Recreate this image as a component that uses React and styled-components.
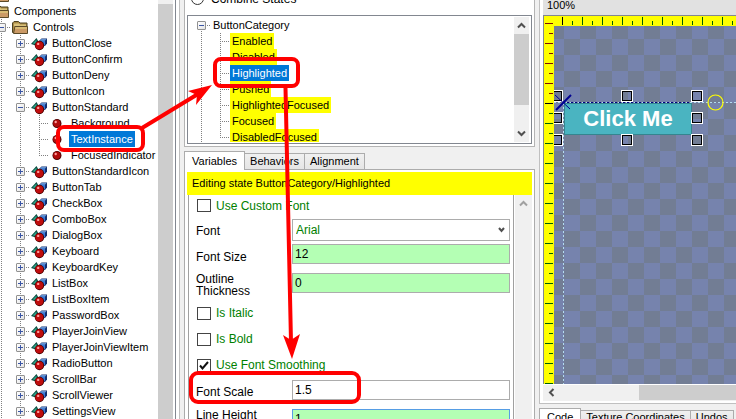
import React from "react";
import styled, { createGlobalStyle, css } from "styled-components";

const GlobalStyle = createGlobalStyle`
  * { box-sizing: border-box; }
  body {
    margin: 0;
    background: #f0f0f0;
    color: #000;
    font: 11px/16px "Liberation Sans", Arial, sans-serif;
    overflow: hidden;
  }
  button, input, select { font: inherit; color: inherit; border-radius: 0; }
`;

const Shell = styled.main`
  position: relative;
  display: grid;
  grid-template-columns: minmax(0, 180px) minmax(0, 359px) minmax(0, 1fr);
  grid-template-rows: minmax(0, 1fr);
  height: 100vh;
  overflow: hidden;
`;

/* ---------- shared tree parts ---------- */

const dotsDown = "repeating-linear-gradient(#808080 0 1px, transparent 1px 2px)";
const dotsAcross = "repeating-linear-gradient(90deg, #808080 0 1px, transparent 1px 2px)";

const Row = styled.div`
  display: flex;
  align-items: center;
  flex: none;
  height: 16px;
  white-space: nowrap;
`;

const Guide = styled.span`
  display: flex;
  align-items: center;
  justify-content: ${(p) => (p.$edge ? "flex-start" : "center")};
  flex: none;
  width: ${(p) => (p.$edge ? 11 : 19)}px;
  height: 16px;
  overflow: hidden;
  background-repeat: no-repeat;
  background-image: ${(p) => (p.$down ? dotsDown : "none")}, ${(p) => (p.$across ? dotsAcross : "none")};
  background-size: 1px ${(p) => (p.$down === "half" ? "8px" : "16px")}, ${(p) => (p.$edge ? 8 : 10)}px 1px;
  background-position: ${(p) => (p.$edge ? 1 : 9)}px ${(p) => (p.$down === "below" ? "8px" : "0")}, right 8px;
`;

const ExpanderButton = styled.button`
  display: flex;
  flex: none;
  width: 9px;
  height: 9px;
  margin: 0 0 0 ${(p) => (p.$edge ? -3 : 0)}px;
  padding: 0;
  border: 1px solid #919191;
  border-radius: 1px;
  background: linear-gradient(135deg, #fff, #e4e4e4);
`;

const Label = styled.span`
  flex: none;
  height: 16px;
  padding: 0 2px;
  color: ${(p) => (p.$selected ? "#fff" : "#000")};
  background: ${(p) => (p.$selected ? "#0078d7" : p.$marked ? "#ffff00" : "transparent")};
`;

const IconCell = styled.span`
  display: flex;
  flex: none;
  width: 20px;
  height: 16px;
  padding-left: 1px;
  margin-left: ${(p) => (p.$root ? -8 : 0)}px;
`;

function Expander({ open, edge, name }) {
  return (
    <ExpanderButton $edge={edge} aria-label={`${open ? "Collapse" : "Expand"} ${name}`}>
      <svg width="7" height="7" shapeRendering="crispEdges" aria-hidden="true">
        <path d={open ? "M1 3.5h5" : "M1 3.5h5M3.5 1v5"} stroke="#3b56a5" />
      </svg>
    </ExpanderButton>
  );
}

const FolderIcon = () => (
  <svg width="17" height="16" viewBox="0 0 17 16" aria-hidden="true">
    <path d="M.5 13.500V4L2 2.500h4.500L8 4h7v9.500z" fill="#a98a45" stroke="#4d4222" />
    <path d="M2 4.500h5l1 1h6v1.500H2z" fill="#d9c27c" />
    <path d="M1.500 14.500L3 7.500h12.500v7z" fill="#cb9a66" stroke="#5b4a28" />
    <path d="M3.500 8h11.500v2H3z" fill="#d8bb74" />
  </svg>
);

const ComponentIcon = () => (
  <svg width="17" height="16" viewBox="0 0 17 16" aria-hidden="true">
    <path d="M8.500 5.500L10.500 3.500H16v5L14 11H8.500z" fill="#122f6e" />
    <path d="M9 5.500h5v5H9z" fill="#3478da" />
    <path d="M10.500 4.200h5L14 5.500H9z" fill="#7fb5f5" />
    <path d="M0 9L5.500 3L8.500 8.500L5 10.500z" fill="#08483c" />
    <path d="M1.500 8.500L5.500 4.500v4.500z" fill="#2fa58a" />
    <circle cx="8.500" cy="10.500" r="4.700" fill="#4e0000" />
    <circle cx="8.300" cy="10.300" r="3.900" fill="#bf0c0c" />
    <circle cx="7.200" cy="8.900" r="1.200" fill="#ff9c9c" />
  </svg>
);

const BallIcon = () => (
  <svg width="16" height="16" viewBox="0 0 16 16" aria-hidden="true">
    <circle cx="7" cy="8.500" r="4.500" fill="#4e0000" />
    <circle cx="6.800" cy="8.300" r="3.600" fill="#b00c0c" />
    <circle cx="5.700" cy="7" r="1.200" fill="#ff9c9c" />
  </svg>
);

/* ---------- scroll bars ---------- */

const Chevron = styled.svg`
  display: block;
  flex: none;
  fill: none;
  stroke: ${(p) => p.$tone || "#505050"};
  stroke-width: 2;
`;

const ScrollTrack = styled.div`
  display: flex;
  flex-direction: column;
  align-items: center;
  justify-content: space-between;
  flex: none;
  width: ${(p) => p.$width || 15}px;
  padding: 5px 0;
  background: #f0f0f0;
`;

const Thumb = styled.div`
  align-self: stretch;
  flex: none;
  background: #cdcdcd;
  ${(p) => (p.$share ? css`height: ${p.$share}; margin: 5px 0 auto;` : css`flex: 1;`)}
`;

const Up = ({ tone }) => (
  <Chevron width="9" height="7" $tone={tone} aria-hidden="true"><path d="M1 5.500L4.500 2L8 5.500" /></Chevron>
);
const Down = () => (
  <Chevron width="9" height="7" aria-hidden="true"><path d="M1 1.500L4.500 5L8 1.500" /></Chevron>
);

/* ---------- element tree ---------- */

const TreePane = styled.nav`
  display: flex;
  border-right: 1px solid #c0c0c0;
  background: #fff;
  min-width: 0;
`;

const TreeBody = styled.div`
  display: flex;
  flex-direction: column;
  flex: 1;
  min-width: 0;
  overflow: hidden;
  background: #fff;
`;

const ClippedRow = styled(Row)`
  height: 3px;
  align-items: flex-end;
  overflow: hidden;
`;

const TreeFrame = styled.div`
  display: flex;
  flex: 1;
  min-width: 0;
  margin-right: 3px;
  padding-right: 2px;
  border-right: 1px solid #828790;
`;

const TreeTrack = styled(ScrollTrack)`
  padding: 4px 0 0;
`;

const beforeOpen = ["ButtonClose", "ButtonConfirm", "ButtonDeny", "ButtonIcon"];
const parts = ["Background", "TextInstance", "FocusedIndicator"];
const afterOpen = [
  "ButtonStandardIcon", "ButtonTab", "CheckBox", "ComboBox", "DialogBox", "Keyboard", "KeyboardKey",
  "ListBox", "ListBoxItem", "PasswordBox", "PlayerJoinView", "PlayerJoinViewItem", "RadioButton",
  "ScrollBar", "ScrollViewer", "SettingsView",
];

function ComponentRow({ name, open }) {
  return (
    <Row>
      <Guide $edge $down="full" />
      <Guide $down="full" $across><Expander open={open} name={name} /></Guide>
      <IconCell><ComponentIcon /></IconCell>
      <Label>{name}</Label>
    </Row>
  );
}

function ElementTree() {
  return (
    <TreePane aria-label="Elements">
      <TreeFrame>
        <TreeBody>
          <ClippedRow><IconCell $root><FolderIcon /></IconCell></ClippedRow>
          <Row><IconCell $root><FolderIcon /></IconCell><Label>Components</Label></Row>
          <Row>
            <Guide $edge $down="full" $across><Expander open edge name="Controls" /></Guide>
            <IconCell><FolderIcon /></IconCell>
            <Label>Controls</Label>
          </Row>
          {beforeOpen.map((n) => <ComponentRow key={n} name={n} />)}
          <ComponentRow name="ButtonStandard" open />
          {parts.map((n, i) => (
            <Row key={n}>
              <Guide $edge $down="full" />
              <Guide $down="full" />
              <Guide $down={i === parts.length - 1 ? "half" : "full"} $across />
              <IconCell><BallIcon /></IconCell>
              <Label $selected={n === "TextInstance"}>{n}</Label>
            </Row>
          ))}
          {afterOpen.map((n) => <ComponentRow key={n} name={n} />)}
        </TreeBody>
        <TreeTrack><Thumb /></TreeTrack>
      </TreeFrame>
    </TreePane>
  );
}

/* ---------- states and variables ---------- */

const MiddlePane = styled.div`
  display: flex;
  flex-direction: column;
  min-width: 0;
  padding: 0 4px;
`;

const StatesPanel = styled.section`
  flex: none;
  padding: 0 2px 2px;
  border: 1px solid #b4b4b4;
  border-top: 0;
  background: #fff;
`;

const CombineOption = styled.label`
  display: flex;
  align-items: flex-end;
  gap: 7px;
  height: 15px;
  padding: 0 0 9px 4px;
  font-size: 12px;
  overflow: hidden;
  white-space: nowrap;

  span { line-height: 14px; }
`;

const Radio = styled.input`
  appearance: none;
  flex: none;
  width: 13px;
  height: 13px;
  margin: 0 0 1px;
  border: 1px solid #333;
  border-radius: 50%;
  background: #fff;
`;

const StateBox = styled.div`
  display: flex;
  height: 129px;
  padding: 1px 2px 1px 4px;
  border: 1px solid #828790;
`;

const states = ["Enabled", "Disabled", "Highlighted", "Pushed", "HighlightedFocused", "Focused", "DisabledFocused"];

const TabStrip = styled.div`
  display: flex;
  align-items: flex-end;
  flex: none;
  height: 22px;
`;

const Tab = styled.button`
  flex: none;
  height: ${(p) => (p.$active ? 19 : 16)}px;
  margin-bottom: ${(p) => (p.$active ? -1 : 0)}px;
  padding: 0 ${(p) => (p.$active ? 7 : 5)}px;
  border: 1px solid #acacac;
  border-bottom: 0;
  border-left-width: ${(p) => (p.$joined ? 0 : 1)}px;
  background: ${(p) => (p.$active ? "#fff" : "linear-gradient(#f0f0f0, #e5e5e5)")};
  line-height: 15px;
  white-space: nowrap;
  z-index: 1;
`;

const VariablesPanel = styled.section`
  display: flex;
  flex-direction: column;
  flex: 1;
  min-height: 0;
  padding: 2px 2px 0;
  border: 1px solid #acacac;
  border-bottom: 0;
  background: #fff;
`;

const Banner = styled.div`
  flex: none;
  height: 23px;
  padding-left: 5px;
  background: #ffff00;
  line-height: 23px;
  white-space: nowrap;
`;

const FormArea = styled.div`
  display: flex;
  flex: 1;
  min-height: 0;
  padding-left: 1px;
`;

const Form = styled.form`
  display: flex;
  flex-direction: column;
  flex: 1;
  min-width: 0;
  margin-right: 1px;
  border: solid #a0a0a0;
  border-width: 0 1px;
  overflow: hidden;
  font-size: 12px;
`;

const CheckLine = styled.label`
  display: flex;
  align-items: center;
  flex: none;
  gap: 5px;
  height: ${(p) => (p.$first ? 23 : 26)}px;
  padding: 0 0 2px 8px;
  color: #008000;
  white-space: nowrap;
`;

const CheckBox = styled.input`
  appearance: none;
  flex: none;
  width: 14px;
  height: 13px;
  margin: 0;
  border: 1px solid #444;
  background: #fff;

  &:checked {
    background: url("data:image/svg+xml,%3Csvg xmlns='http://www.w3.org/2000/svg' viewBox='0 0 12 11'%3E%3Cpath d='M2 5.500L4.500 8.500L10 2' fill='none' stroke='%23111' stroke-width='2'/%3E%3C/svg%3E") center / 12px 11px no-repeat;
  }
`;

const Field = styled.label`
  display: grid;
  grid-template-columns: 103px minmax(0, 1fr);
  align-items: start;
  flex: none;
  height: ${(p) => (p.$compact ? 25 : 29)}px;
  padding: 1px 3px 0 0;
`;

const FieldName = styled.span`
  padding: ${(p) => p.$drop}px 30px 0 7px;
  line-height: 12px;
`;

const fieldBox = css`
  width: 100%;
  margin: 0;
  border: 1px solid #acacac;
  outline: 0;
`;

const TextField = styled.input`
  ${fieldBox}
  height: 20px;
  padding: 0 2px;
  background: ${(p) => (p.$plain ? "#fff" : "#b4ffb4")};
  border-color: ${(p) => (p.$focused ? "#569de5" : "#acacac")};
`;

const SelectWrap = styled.span`
  display: grid;
  align-items: center;

  > * { grid-area: 1 / 1; }
  > svg { justify-self: end; margin-right: 5px; pointer-events: none; }
`;

const SelectField = styled.select`
  ${fieldBox}
  appearance: none;
  height: 22px;
  padding: 0 3px;
  background: #fff;
  color: #008000;
`;

function CheckRow({ text, checked, first }) {
  return (
    <CheckLine $first={first}>
      <CheckBox type="checkbox" defaultChecked={checked} />
      {text}
    </CheckLine>
  );
}

function TextRow({ name, value, drop, plain, focused }) {
  return (
    <Field>
      <FieldName $drop={drop}>{name}</FieldName>
      <TextField defaultValue={value} $plain={plain} $focused={focused} />
    </Field>
  );
}

function Inspector() {
  return (
    <MiddlePane>
      <StatesPanel aria-label="States">
        <CombineOption><Radio type="radio" name="stateMode" /><span>Combine States</span></CombineOption>
        <StateBox>
          <TreeBody>
            <Row>
              <Guide $down="below" $across><Expander open name="ButtonCategory" /></Guide>
              <Label>ButtonCategory</Label>
            </Row>
            {states.map((n, i) => (
              <Row key={n}>
                <Guide $down="full" />
                <Guide $down={i === states.length - 1 ? "half" : "full"} $across />
                <Label $marked $selected={n === "Highlighted"}>{n}</Label>
              </Row>
            ))}
          </TreeBody>
          <ScrollTrack><Up /><Thumb $share="71px" /><Down /></ScrollTrack>
        </StateBox>
      </StatesPanel>
      <TabStrip>
        <Tab $active>Variables</Tab>
        <Tab $joined>Behaviors</Tab>
        <Tab $joined>Alignment</Tab>
      </TabStrip>
      <VariablesPanel>
        <Banner>Editing state ButtonCategory/Highlighted</Banner>
        <FormArea>
          <Form>
            <CheckRow text="Use Custom Font" first />
            <Field $compact>
              <FieldName $drop={6}>Font</FieldName>
              <SelectWrap>
                <SelectField defaultValue="Arial"><option>Arial</option></SelectField>
                <Chevron width="7" height="6" aria-hidden="true"><path d="M1 1L3.500 4L6 1" /></Chevron>
              </SelectWrap>
            </Field>
            <TextRow name="Font Size" value="12" drop={7} />
            <TextRow name="Outline Thickness" value="0" drop={0} />
            <CheckRow text="Is Italic" />
            <CheckRow text="Is Bold" />
            <CheckRow text="Use Font Smoothing" checked />
            <TextRow name="Font Scale" value="1.5" drop={6} plain />
            <TextRow name="Line Height" value="1" drop={0} focused />
          </Form>
          <ScrollTrack $width={17}><Up tone="#a0a0a0" /></ScrollTrack>
        </FormArea>
      </VariablesPanel>
    </MiddlePane>
  );
}

/* ---------- editor ---------- */

const EditorPane = styled.section`
  display: flex;
  flex-direction: column;
  min-width: 0;
  min-height: 0;
`;

const EditorFrame = styled.div`
  display: flex;
  flex-direction: column;
  flex: 1;
  min-height: 0;
  padding: 0 0 2px 3px;
  border: solid #c0c0c0;
  border-width: 0 0 1px 1px;
  background: #fff;
`;

const ZoomBar = styled.div`
  flex: none;
  height: 15px;
  padding-left: 4px;
  overflow: hidden;
  background: #e1e1e1;
  line-height: 11px;
`;

const Surface = styled.div`
  display: grid;
  grid-template: 10px minmax(0, 1fr) / 10px minmax(0, 1fr);
  flex: 1;
  min-height: 0;
  border: solid #828790;
  border-width: 1px 0 0 1px;
  background: #ffff00;
`;

const Ruler = styled.svg`
  display: block;
  width: 100%;
  height: 100%;
  overflow: hidden;
  grid-area: ${(p) => p.$area};
`;

const Stage = styled.div`
  grid-area: 2 / 2;
  position: relative;
  overflow: hidden;
  background: conic-gradient(#727d94 25%, #7683ad 0 50%, #727d94 0 75%, #7683ad 0) 10px -3px / 32px 32px;
`;

const StageButton = styled.button`
  position: absolute;
  left: 10px;
  top: 77px;
  width: 128px;
  height: 32px;
  padding: 0;
  border: 1px solid #34858f;
  background: #4ab4c1;
  color: #fff;
  font-size: 22px;
  font-weight: 700;
  line-height: 30px;
  white-space: nowrap;
`;

const Overlay = styled.svg`
  position: absolute;
  inset: 0;
  z-index: 2;
  width: 100%;
  height: 100%;
  pointer-events: none;
`;

const BottomTrack = styled.div`
  display: flex;
  flex: none;
  height: 16px;
  margin-top: 1px;
  padding-bottom: 1px;
  background: #f0f0f0;

  svg { margin: 3px 0 0 4px; }
`;

const BottomThumb = styled.div`
  flex: 1;
  margin-left: 84px;
  background: #cdcdcd;
`;

const BottomTabs = styled.div`
  display: flex;
  align-items: flex-start;
  flex: none;
  height: 11px;
  margin-top: 4px;
  overflow: hidden;
`;

const BottomTab = styled(Tab)`
  height: ${(p) => (p.$active ? 17 : 14)}px;
  margin: ${(p) => (p.$active ? 0 : 2)}px 0 0;
  line-height: ${(p) => (p.$active ? 16 : 13)}px;
`;

const ticks = Array.from({ length: 80 }, (_, i) => i);
const handles = [[67, 64], [137, 64], [-3, 64], [-3, 86], [137, 86], [-3, 108], [67, 108], [137, 108]];

function tickColor(i, origin) {
  if (i === origin) return "#000";
  return i < origin ? "#7d1000" : "#006000";
}

const VerticalRuler = () => (
  <Ruler $area="2 / 1" shapeRendering="crispEdges" aria-hidden="true">
    {ticks.map((i) => (
      <path key={i} d={`M${i % 2 ? 5 : 1} ${10 * i - 2.5}H9`} stroke={tickColor(i, 8)} />
    ))}
  </Ruler>
);

const HorizontalRuler = () => (
  <Ruler $area="1 / 1 / 2 / 3" shapeRendering="crispEdges" aria-hidden="true">
    <path d="M1 7.500H9" stroke="#7d1000" />
    {ticks.map((i) => (
      <path key={i} d={`M${18.5 + 10 * i} ${i % 2 ? 5 : 1}V9`} stroke={tickColor(i, 0)} />
    ))}
  </Ruler>
);

function Editor() {
  return (
    <EditorPane aria-label="Editor">
      <EditorFrame>
        <ZoomBar>100%</ZoomBar>
        <Surface>
          <HorizontalRuler />
          <VerticalRuler />
          <Stage>
            <StageButton>Click Me</StageButton>
            <Overlay aria-hidden="true">
              <path d="M0 76.500H2000M9.500 77V2000" stroke="#b4dcf0" strokeDasharray="2 2" shapeRendering="crispEdges" />
              <path d="M9 76.500H137" stroke="#000080" strokeDasharray="2 2" shapeRendering="crispEdges" />
              {handles.map(([x, y]) => (
                <g key={`${x},${y}`} fill="none" shapeRendering="crispEdges">
                  <rect x={x + 0.5} y={y + 0.5} width="11" height="11" stroke="#fff" />
                  <rect x={x + 1.5} y={y + 1.5} width="9" height="9" stroke="#000" />
                </g>
              ))}
              <path d="M2 84L17 69" stroke="#000090" strokeWidth="2" />
              <path d="M1 69L16 83" stroke="#000090" />
              <circle cx="161.500" cy="76.500" r="7.500" fill="none" stroke="#ffff00" strokeWidth="1.200" />
            </Overlay>
          </Stage>
        </Surface>
        <BottomTrack>
          <Chevron width="8" height="9" aria-hidden="true"><path d="M6.500 1L3 4.500L6.500 8" /></Chevron>
          <BottomThumb />
        </BottomTrack>
      </EditorFrame>
      <BottomTabs>
        <BottomTab $active>Code</BottomTab>
        <BottomTab $joined>Texture Coordinates</BottomTab>
        <BottomTab $joined>Undos</BottomTab>
      </BottomTabs>
    </EditorPane>
  );
}

/* ---------- call-outs ---------- */

const Callouts = () => (
  <Overlay aria-hidden="true">
    <g fill="none" stroke="#ff0000" strokeWidth="4">
      <rect x="58" y="127" width="85" height="23" rx="6" />
      <rect x="215" y="59" width="83" height="27" rx="6" />
      <rect x="191" y="373" width="168" height="29" rx="7" />
      <path d="M142 128L198 94M285.500 88L291 342" />
    </g>
    <path d="M212 85L188 91L197 95L196 105zM292 359L283 335L291 340L300 334z" fill="#ff0000" />
  </Overlay>
);

export default function App() {
  return (
    <>
      <GlobalStyle />
      <Shell>
        <ElementTree />
        <Inspector />
        <Editor />
        <Callouts />
      </Shell>
    </>
  );
}
